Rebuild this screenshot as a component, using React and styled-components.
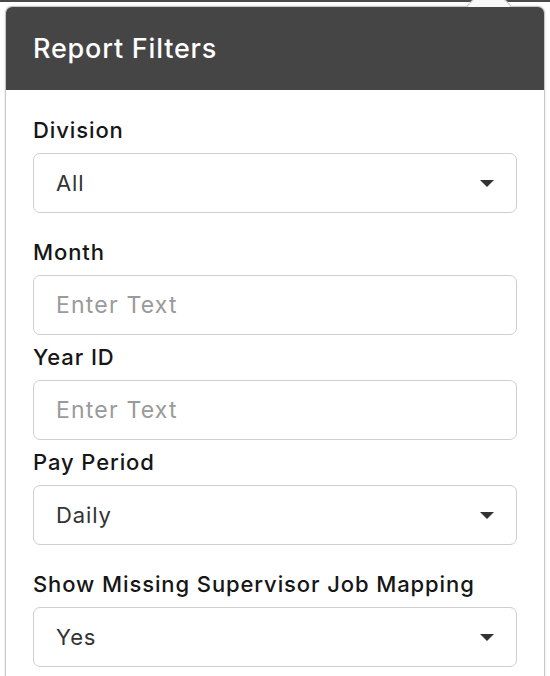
import React from 'react';
import styled, { createGlobalStyle } from 'styled-components';

const GlobalStyle = createGlobalStyle`
  html, body {
    margin: 0;
    padding: 0;
    background: #ffffff;
    font-family: Inter, "Noto Sans", "Liberation Sans", sans-serif;
    overflow: hidden;
  }
  * {
    box-sizing: border-box;
  }
`;

const Page = styled.div`
  width: 550px;
  height: 676px;
  overflow: hidden;
`;

const TopRule = styled.div`
  height: 2px;
  background: #4a4a4a;
`;

const Popover = styled.div`
  position: relative;
  z-index: 1;
  margin: 4px 5px 0 5px;
  background: #ffffff;
  border: 1px solid #c6c6c6;
  border-radius: 7px;
  box-shadow: 0 0 2px rgba(0, 0, 0, 0.15);
`;

const Arrow = styled.span`
  position: absolute;
  top: -17px;
  left: 467px;
  width: 32px;
  height: 32px;
  background: #f8f8f8;
  border: 1px solid #c6c6c6;
  transform: rotate(45deg);
  z-index: 0;
`;

const Header = styled.div`
  position: relative;
  z-index: 1;
  height: 83px;
  display: flex;
  align-items: center;
  padding: 0 27px;
  background: #454545;
  border-radius: 6px 6px 0 0;
  color: #ffffff;
  font-size: 27px;
  font-weight: 500;
  letter-spacing: 0.8px;
`;

const Body = styled.div`
  padding: 24px 27px 40px;
`;

const Field = styled.div`
  display: flex;
  flex-direction: column;
  gap: 6px;
  margin-bottom: ${(p) => (p.$select ? '23px' : '6px')};
`;

const Label = styled.label`
  font-size: 22px;
  line-height: 33px;
  font-weight: 500;
  letter-spacing: 0.9px;
  color: #161616;
`;

const SelectBox = styled.div`
  height: 60px;
  display: flex;
  align-items: center;
  justify-content: space-between;
  padding: 0 22px 0 22px;
  border: 1px solid #cfcfcf;
  border-radius: 7px;
  background: #ffffff;
  font-size: 22px;
  letter-spacing: 0.9px;
  color: #333333;
`;

const TextInput = styled.input`
  height: 60px;
  width: 100%;
  padding: 0 22px;
  border: 1px solid #cfcfcf;
  border-radius: 7px;
  background: #ffffff;
  font-family: inherit;
  font-size: 23px;
  letter-spacing: 1.2px;
  color: #333333;
  outline: none;
  &::placeholder {
    color: #9a9a9a;
  }
`;

const Caret = () => (
  <svg width="14" height="7" viewBox="0 0 14 7">
    <path d="M0 0 L14 0 L7 7 Z" fill="#333333" />
  </svg>
);

function SelectField({ label, value }) {
  return (
    <Field $select>
      <Label>{label}</Label>
      <SelectBox>
        <span>{value}</span>
        <Caret />
      </SelectBox>
    </Field>
  );
}

function InputField({ label }) {
  return (
    <Field>
      <Label>{label}</Label>
      <TextInput placeholder="Enter Text" />
    </Field>
  );
}

export default function App() {
  return (
    <Page>
      <GlobalStyle />
      <TopRule />
      <Popover>
        <Arrow />
        <Header>Report Filters</Header>
        <Body>
          <SelectField label="Division" value="All" />
          <InputField label="Month" />
          <InputField label="Year ID" />
          <SelectField label="Pay Period" value="Daily" />
          <SelectField label="Show Missing Supervisor Job Mapping" value="Yes" />
        </Body>
      </Popover>
    </Page>
  );
}
